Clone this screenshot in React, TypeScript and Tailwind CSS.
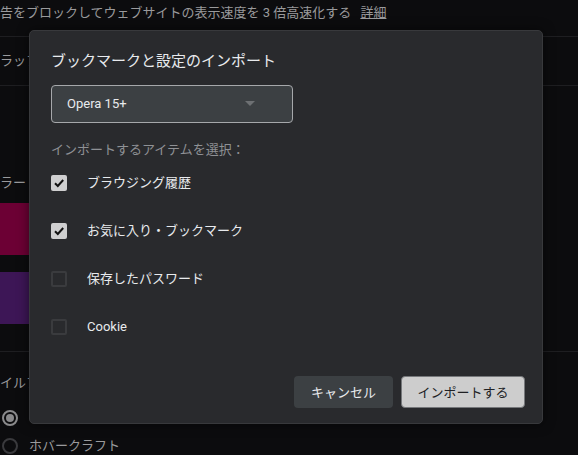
import React from "react";

const jp = { fontFamily: "'Noto Sans CJK JP', 'Noto Sans', sans-serif" };
const mixed = { fontFamily: "Roboto, 'Noto Sans CJK JP', sans-serif" };

function Check({ checked }: { checked: boolean }) {
  if (checked) {
    return (
      <div className="w-[16px] h-[16px] rounded-[2px] bg-[#cfcfd0] flex items-center justify-center">
        <svg width="12" height="12" viewBox="0 0 12 12">
          <path d="M2 6.2 L4.8 9 L10.2 3" fill="none" stroke="#111" strokeWidth="2" />
        </svg>
      </div>
    );
  }
  return <div className="w-[16px] h-[16px] rounded-[2px] border-2 border-[#3a3b3e]" />;
}

export default function App() {
  const items: [string, boolean][] = [
    ["ブラウジング履歴", true],
    ["お気に入り・ブックマーク", true],
    ["保存したパスワード", false],
    ["Cookie", false],
  ];
  return (
    <div className="relative w-[578px] h-[455px] overflow-hidden bg-[#0c0c0e] text-[#9a9a9c]" style={mixed}>
      {/* background page */}
      <div className="flex flex-col">
        <div className="h-[36px] flex items-start pt-[3px] text-[13px] whitespace-nowrap">
          <span>告をブロックしてウェブサイトの表示速度を 3 倍高速化する</span>
          <span className="ml-[9px] underline">詳細</span>
        </div>
        <div className="h-px bg-[#1e1e21]" />
        <div className="h-[48px] flex items-center text-[13px]">ラッフ</div>
        <div className="h-px bg-[#1e1e21]" />
        <div className="h-[86px]" />
        <div className="h-[20px] flex items-center text-[13px] leading-none">ラー</div>
        <div className="h-[11px]" />
        <div className="h-[52px] w-[40px] bg-[#6c0034]" />
        <div className="h-[17px]" />
        <div className="h-[52px] w-[40px] bg-[#3d1656]" />
        <div className="h-[27px]" />
        <div className="h-px bg-[#1e1e21]" />
        <div className="h-[21px]" />
        <div className="h-[20px] flex items-center text-[13px]">イルフ</div>
        <div className="h-[17px]" />
        <div className="flex flex-col gap-[12px] pl-[2px]">
          <div className="flex items-center h-[16px]">
            <div className="w-[16px] h-[16px] rounded-full border-2 border-[#8a8a8c] flex items-center justify-center">
              <div className="w-[8px] h-[8px] rounded-full bg-[#8a8a8c]" />
            </div>
          </div>
          <div className="flex items-center h-[16px] gap-[11px] text-[13px]">
            <div className="w-[16px] h-[16px] rounded-full border-2 border-[#3a3a3d]" />
            <span>ホバークラフト</span>
          </div>
        </div>
      </div>

      {/* dialog */}
      <div className="absolute left-[29px] top-[30px] w-[514px] h-[394px] rounded-[5px] bg-[#292a2d] border border-[#38393c] shadow-[0_0_12px_rgba(0,0,0,0.5)] px-[21px] pt-[16px]">
        <div className="text-[15px] text-[#e8eaed] h-[26px] flex items-center" style={jp}>
          ブックマークと設定のインポート
        </div>
        <div className="mt-[12px] w-[242px] h-[38px] rounded-[4px] bg-[#3c4043] border border-[#a6a8ab] flex items-center justify-between pl-[15px] pr-[37px]">
          <span className="text-[13px] text-[#e8eaed]">Opera 15+</span>
          <svg width="10" height="6" viewBox="0 0 10 6">
            <path d="M0 0 L10 0 L5 5 Z" fill="#6d7073" />
          </svg>
        </div>
        <div className="mt-[16px] text-[13px] text-[#8f9195] h-[20px] flex items-center" style={jp}>
          インポートするアイテムを選択：
        </div>
        <div className="mt-[16px] flex flex-col gap-[32px]">
          {items.map(([label, c]) => (
            <div key={label} className="flex items-center h-[16px]">
              <Check checked={c} />
              <span className="ml-[20px] text-[13px] text-[#e8eaed]">{label}</span>
            </div>
          ))}
        </div>
        <div className="absolute right-[17px] bottom-[15px] flex gap-[8px]">
          <button className="w-[99px] h-[32px] rounded-[4px] bg-[#3c4043] text-[13px] text-[#e8eaed]" style={jp}>
            キャンセル
          </button>
          <button className="w-[124px] h-[32px] rounded-[4px] bg-[#cdcdcd] border border-[#76787b] text-[13px] text-[#202124]" style={jp}>
            インポートする
          </button>
        </div>
      </div>
    </div>
  );
}
